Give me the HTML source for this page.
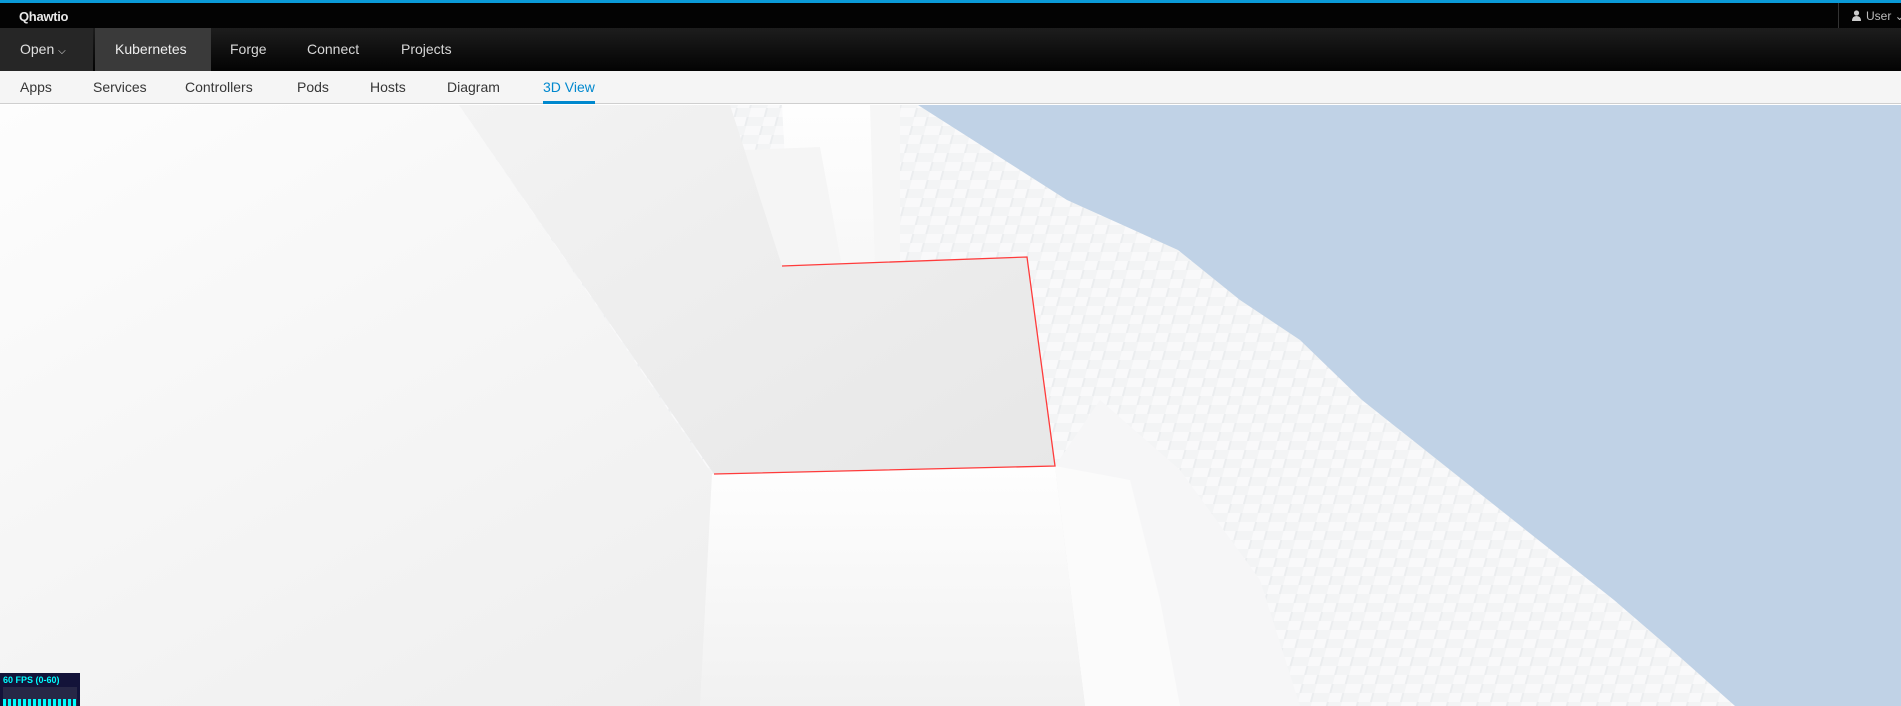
<!DOCTYPE html>
<html><head><meta charset="utf-8"><style>
*{margin:0;padding:0;box-sizing:border-box}
body{width:1901px;height:706px;overflow:hidden;font-family:"Liberation Sans",sans-serif;background:#fff;position:relative}
#top{position:absolute;left:0;top:0;width:1901px;height:3px;background:#0a9ad8}
#hdr{position:absolute;left:0;top:3px;width:1901px;height:25px;background:#030303}
#logo{position:absolute;left:19px;top:6px;color:#e8e8e8;font-size:13px;font-weight:bold;letter-spacing:-0.3px}
#user{position:absolute;left:1838px;top:0;height:25px;border-left:1px solid #333;color:#bbb;font-size:12px;padding:6px 0 0 12px;width:70px}
#nav{position:absolute;left:0;top:28px;width:1901px;height:43px;background:linear-gradient(#1d1d1d,#030303)}
.ni{position:absolute;top:0;height:43px;line-height:43px;color:#d8d8d8;font-size:14px}
#sub{position:absolute;left:0;top:71px;width:1901px;height:33px;background:#f5f5f5;border-bottom:1px solid #cfcfcf}
.si{position:absolute;top:0;height:33px;line-height:33px;color:#363636;font-size:14px}
#fps{position:absolute;left:0;top:673px;width:80px;height:33px;background:#131339}
</style></head><body>
<div id="top"></div>
<div id="hdr"><div id="logo">Qhawtio</div>
<div id="user"><svg width="11" height="11" viewBox="0 0 11 11" style="vertical-align:-1px;margin-right:4px"><circle cx="5.5" cy="3" r="2.6" fill="#ccc"/><path d="M1 11 Q1 6 5.5 6 Q10 6 10 11Z" fill="#ccc"/></svg>User ⌄</div></div>
<div id="nav">
<div class="ni" style="left:0;width:93px;background:#262626;padding-left:20px;color:#e0e0e0">Open <span style="font-size:10px">⌵</span></div>
<div class="ni" style="left:95px;width:116px;background:#3a3a3a;padding-left:20px;color:#eee">Kubernetes</div>
<div class="ni" style="left:230px">Forge</div>
<div class="ni" style="left:307px">Connect</div>
<div class="ni" style="left:401px">Projects</div>
</div>
<div id="sub">
<div class="si" style="left:20px">Apps</div>
<div class="si" style="left:93px">Services</div>
<div class="si" style="left:185px">Controllers</div>
<div class="si" style="left:297px">Pods</div>
<div class="si" style="left:370px">Hosts</div>
<div class="si" style="left:447px">Diagram</div>
<div class="si" style="left:543px;color:#0088ce;border-bottom:3px solid #0088ce;height:33px">3D View</div>
</div>
<svg style="position:absolute;left:0;top:105px" width="1901" height="601" viewBox="0 105 1901 601">
<defs>
<linearGradient id="gl" x1="0" y1="0" x2="1" y2="1"><stop offset="0" stop-color="#fdfdfd"/><stop offset="1" stop-color="#ebebeb"/></linearGradient>
<linearGradient id="gg" x1="0" y1="0" x2="1" y2="1"><stop offset="0" stop-color="#f3f3f3"/><stop offset="1" stop-color="#e7e7e7"/></linearGradient>
<linearGradient id="gb" x1="0" y1="0" x2="0" y2="1"><stop offset="0" stop-color="#fefefe"/><stop offset="1" stop-color="#f1f1f1"/></linearGradient>
<pattern id="blk" width="30" height="18" patternUnits="userSpaceOnUse" patternTransform="skewX(-15)">
<rect width="30" height="18" fill="#f3f4f5"/>
<rect x="0" y="0" width="16" height="9" fill="#f9f9fa"/>
<rect x="16" y="9" width="14" height="9" fill="#f9f9fa"/>
<rect x="15" y="0" width="2" height="9" fill="#ebedef"/>
<rect x="28" y="9" width="2" height="9" fill="#ebedef"/>
</pattern>
</defs>
<rect x="0" y="105" width="1901" height="601" fill="#c0d2e6"/>
<polygon points="0,105 918,105 1067,200 1178,250 1240,300 1300,340 1362,400 1425,450 1488,500 1551,550 1614,600 1672,650 1735,706 0,706" fill="url(#blk)"/>
<polygon points="860,105 900,105 900,430 870,430" fill="#f6f6f6"/>
<polygon points="1055,466 1085,706 1300,706 1260,580 1180,470 1100,400" fill="#f6f6f7"/>
<polygon points="1055,466 1085,706 1180,706 1160,600 1130,480" fill="#fbfbfb"/>
<polygon points="782,105 870,105 880,430 800,430" fill="url(#gb)"/>
<polygon points="744,150 820,147 850,310 782,312" fill="#f5f5f5"/>
<polygon points="0,105 459,105 712,474 1055,466 1085,706 0,706" fill="url(#gl)"/>
<polygon points="712,474 1055,466 1085,706 700,706" fill="url(#gb)"/>
<polygon points="459,105 730,105 782,266 1027,257 1055,466 714,474" fill="url(#gg)"/>
<polyline points="782,266 1027,257 1055,466 714,474" fill="none" stroke="#ff3b3b" stroke-width="1.3"/>
</svg>
<div id="fps"><div style="color:#0ff;font-size:9px;font-weight:bold;padding:2px 0 0 3px">60 FPS (0-60)</div>
<div style="position:absolute;left:3px;top:14px;width:74px;height:16px;background:#272746"></div>
<div style="position:absolute;left:3px;top:26px;width:74px;height:7px;background:repeating-linear-gradient(90deg,#0ff 0 3px,#272746 3px 5px)"></div></div>
</body></html>
